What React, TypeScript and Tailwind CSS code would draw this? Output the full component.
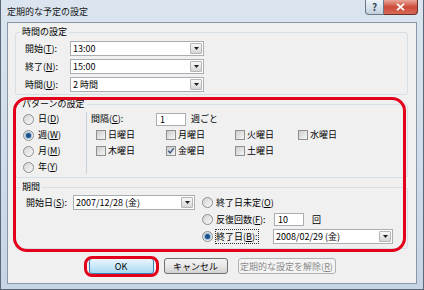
import React from 'react';

// 定期的な予定の設定 ダイアログ (Vista 風)

function Combo({ value, className }: { value: string; className: string }) {
  return (
    <div className={`flex items-center h-[15px] bg-white border border-[#abadb3] pl-[2px] pr-[1px] ${className}`}>
      <span className="flex-1 leading-none whitespace-nowrap">{value}</span>
      <span className="flex items-center justify-center w-[12px] h-[11px] border border-[#b5b5b5] rounded-[1px] bg-linear-to-b from-[#f8f8f8] to-[#d6d6d6]">
        <svg width="5" height="3" viewBox="0 0 5 3"><path d="M0 0h5L2.5 3z" fill="#1e1e1e" /></svg>
      </span>
    </div>
  );
}

function TextBox({ value, className }: { value: string; className: string }) {
  return (
    <div className={`flex items-center h-[13px] bg-white border border-[#abadb3] pl-[3px] leading-none ${className}`}>
      {value}
    </div>
  );
}

function Radio({ checked }: { checked?: boolean }) {
  return (
    <span className="flex items-center justify-center w-[11px] h-[11px] shrink-0 rounded-full border border-[#8e8f8f] bg-linear-to-br from-[#d2d2d2] to-[#fbfbfb]">
      {checked && <span className="w-[5px] h-[5px] rounded-full bg-[#1d4f86] ring-1 ring-[#9cc0e2]" />}
    </span>
  );
}

function Check({ checked, label }: { checked?: boolean; label: string }) {
  return (
    <span className="flex items-center gap-[2px]">
      <span className="flex items-center justify-center w-[10px] h-[10px] shrink-0 border border-[#8e8f8f] bg-white">
        <span className="flex items-center justify-center w-[8px] h-[8px] bg-linear-to-br from-[#cdcdcd] to-[#f6f6f6]">
          {checked && (
            <svg width="8" height="8" viewBox="0 0 8 8">
              <path d="M1.2 3.8 3.2 6 6.8 1.2" stroke="#3a5680" strokeWidth="1.4" fill="none" />
            </svg>
          )}
        </span>
      </span>
      <span className="leading-[12px]">{label}</span>
    </span>
  );
}

function Group({ title, className, children }: { title: string; className?: string; children: React.ReactNode }) {
  return (
    <fieldset className={`border border-[#d5dfe5] rounded-[3px] pl-[4px] ${className ?? ''}`}>
      <legend className="px-[2px] leading-[12px]">{title}</legend>
      {children}
    </fieldset>
  );
}

export default function App() {
  return (
    <div className="w-[424px] h-[290px] flex flex-col bg-linear-to-b from-[#dbe5ef] to-[#c6d5e5] border-x border-b border-[#5b6877] text-[9px] text-black font-['Noto_Sans_CJK_JP',sans-serif] select-none">
      {/* タイトルバー */}
      <div className="h-[22px] shrink-0 flex items-start justify-between pl-[6px] pr-[5px]">
        <span className="mt-[6px] leading-[12px] text-[#151515]">定期的な予定の設定</span>
        <div className="flex">
          <span className="flex items-center justify-center w-[19px] h-[15px] border border-t-0 border-[#6a7788] rounded-bl-[4px] bg-linear-to-b from-[#eef3f8] via-[#d8e2ec] to-[#c2cfdc] text-[10px] font-bold text-[#3a4859] leading-none">?</span>
          <span className="flex items-center justify-center w-[34px] h-[15px] border border-t-0 border-l-0 border-[#6b3128] rounded-br-[4px] bg-linear-to-b from-[#e8a698] via-[#cc4a39] to-[#d66a57]">
            <svg width="9" height="8" viewBox="0 0 9 8">
              <path d="M1 0.8 8 7.2M8 0.8 1 7.2" stroke="#fff" strokeWidth="1.8" />
            </svg>
          </span>
        </div>
      </div>

      {/* クライアント領域 */}
      <div className="flex-1 mx-[6px] mb-[5px] flex flex-col border border-[#8a97a7] bg-[#f0f0f0]">
        <Group title="時間の設定" className="mt-[3px] ml-[7px] mr-[8px]">
          <div className="flex flex-col gap-[3px] pt-[3px] pb-[2px] pl-[5px]">
            <div className="flex items-center">
              <span className="w-[45px] leading-[12px]">開始(<u>T</u>):</span>
              <Combo value="13:00" className="w-[134px]" />
            </div>
            <div className="flex items-center">
              <span className="w-[45px] leading-[12px]">終了(<u>N</u>):</span>
              <Combo value="15:00" className="w-[134px]" />
            </div>
            <div className="flex items-center">
              <span className="w-[45px] leading-[12px]">時間(<u>U</u>):</span>
              <Combo value="2 時間" className="w-[134px]" />
            </div>
          </div>
        </Group>

        <div className="relative mt-[3px] ml-[7px] mr-[8px]">
          <Group title="パターンの設定">
            <div className="flex pt-[1px] pb-[2px]">
              <div className="w-[66px] pl-[3px] flex flex-col">
                {[
                  ['日', 'D', false],
                  ['週', 'W', true],
                  ['月', 'M', false],
                  ['年', 'Y', false],
                ].map(([k, m, c]) => (
                  <div key={k as string} className="h-[16px] flex items-center gap-[4px]">
                    <Radio checked={c as boolean} />
                    <span className="leading-[12px]">{k}(<u>{m}</u>)</span>
                  </div>
                ))}
              </div>
              <div className="w-px my-[1px] bg-[#c9d2da]" />
              <div className="flex-1 pl-[4px] flex flex-col">
                <div className="h-[16px] flex items-center">
                  <span className="w-[65px] leading-[12px]">間隔(<u>C</u>):</span>
                  <TextBox value="1" className="w-[30px]" />
                  <span className="ml-[5px] leading-[12px]">週ごと</span>
                </div>
                <div className="h-[16px] flex items-center ml-[5px]">
                  <span className="w-[70px]"><Check label="日曜日" /></span>
                  <span className="w-[69px]"><Check label="月曜日" /></span>
                  <span className="w-[63px]"><Check label="火曜日" /></span>
                  <Check label="水曜日" />
                </div>
                <div className="h-[16px] flex items-center ml-[5px]">
                  <span className="w-[70px]"><Check label="木曜日" /></span>
                  <span className="w-[69px]"><Check label="金曜日" checked /></span>
                  <Check label="土曜日" />
                </div>
              </div>
            </div>
          </Group>

          <Group title="期間" className="mt-[3px]">
            <div className="flex pt-[1px] pb-[3px] pl-[6px]">
              <div className="h-[17px] flex items-center">
                <span className="w-[47px] leading-[12px]">開始日(<u>S</u>):</span>
                <Combo value="2007/12/28 (金)" className="w-[122px]" />
              </div>
              <div className="ml-[7px] flex flex-col">
                <div className="h-[17px] flex items-center">
                  <Radio />
                  <span className="ml-[3px] leading-[12px]">終了日未定(<u>O</u>)</span>
                </div>
                <div className="h-[17px] flex items-center">
                  <Radio />
                  <span className="ml-[3px] w-[58px] leading-[12px]">反復回数(<u>F</u>):</span>
                  <TextBox value="10" className="w-[30px]" />
                  <span className="ml-[8px] leading-[12px]">回</span>
                </div>
                <div className="h-[17px] flex items-center">
                  <Radio checked />
                  <span className="ml-[3px] w-[57px]">
                    <span className="leading-[11px] outline-1 outline-dotted outline-[#333]">終了日(<u>B</u>):</span>
                  </span>
                  <Combo value="2008/02/29 (金)" className="w-[120px]" />
                </div>
              </div>
            </div>
          </Group>

          <span className="pointer-events-none absolute left-[-2px] right-[2px] top-[-1px] bottom-[-3px] border-[3px] border-[#e3001b] rounded-[14px]" />
        </div>

        <div className="mt-[9px] flex justify-center gap-[10px]">
          <span className="relative">
            <button className="w-[65px] h-[16px] flex items-center justify-center rounded-[3px] border border-[#3c7fb1] bg-linear-to-b from-[#eaf6fd] via-[#c9e8f9] to-[#a9daf4] leading-none">OK</button>
            <span className="pointer-events-none absolute left-[-5px] right-[-5px] top-[-2px] bottom-[-3px] border-[3px] border-[#e3001b] rounded-[8px]" />
          </span>
          <button className="w-[64px] h-[16px] flex items-center justify-center rounded-[3px] border border-[#707070] bg-linear-to-b from-[#f3f3f3] via-[#e8e8e8] to-[#d2d2d2] leading-none">キャンセル</button>
          <button className="w-[98px] h-[16px] flex items-center justify-center rounded-[3px] border border-[#adb2b5] bg-[#f4f4f4] text-[#8a8a8a] leading-none">定期的な設定を解除(<u>R</u>)</button>
        </div>
      </div>
    </div>
  );
}
